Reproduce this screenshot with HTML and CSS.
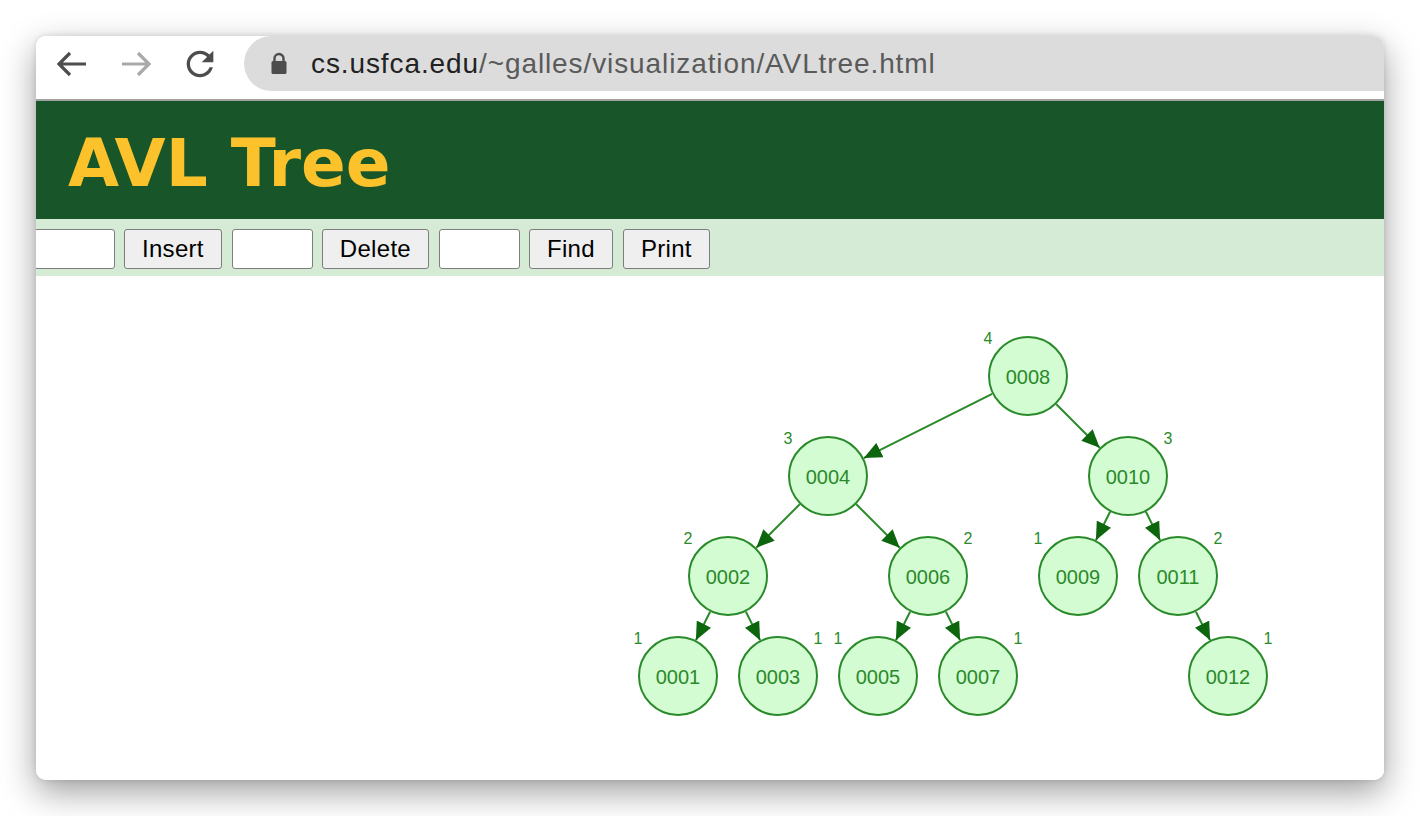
FILE: index.html
```html
<!DOCTYPE html>
<html>
<head>
<meta charset="utf-8">
<title>AVL Tree</title>
<link rel="stylesheet" href="styles.css">
</head>
<body>
<div class="window">
  <div class="browserbar">
    <div class="nav">
      <span class="navbtn">
        <svg width="32" height="26" viewBox="0 0 32 26"><path d="M3 13H30M14 2L3 13L14 24" fill="none" stroke="#4d4d4d" stroke-width="3.2"/></svg>
      </span>
      <span class="navbtn">
        <svg width="32" height="26" viewBox="0 0 32 26"><path d="M2 13H29M18 2L29 13L18 24" fill="none" stroke="#a9a9a9" stroke-width="3.2"/></svg>
      </span>
      <span class="navbtn">
        <svg width="40" height="40" viewBox="0 0 24 24"><path fill="#4d4d4d" d="M17.65 6.35C16.2 4.9 14.21 4 12 4c-4.42 0-7.99 3.58-7.99 8s3.57 8 7.99 8c3.73 0 6.84-2.55 7.73-6h-2.08c-.82 2.33-3.04 4-5.65 4-3.31 0-6-2.69-6-6s2.69-6 6-6c1.66 0 3.14.69 4.22 1.78L13 11h7V4l-2.35 2.35z"/></svg>
      </span>
    </div>
    <div class="omnibox">
      <svg class="lock" width="16" height="23" viewBox="0 0 16 23"><path d="M3.5 10V6.5a4.5 4.5 0 0 1 9 0V10" fill="none" stroke="#4d4d4d" stroke-width="2.4"/><rect x="0.5" y="9" width="15" height="13" rx="1.5" fill="#4d4d4d"/></svg>
      <span class="url"><span class="host">cs.usfca.edu</span>/~galles/visualization/AVLtree.html</span>
    </div>
  </div>
  <div class="header">
    <h1 class="title">AVL Tree</h1>
  </div>
  <div class="controls">
    <input class="field first" type="text">
    <button class="btn">Insert</button>
    <input class="field" type="text">
    <button class="btn">Delete</button>
    <input class="field" type="text">
    <button class="btn">Find</button>
    <button class="btn">Print</button>
  </div>
  <div class="canvas">
    <svg class="tree" width="1348" height="504" viewBox="0 0 1348 504">
      <defs>
        <marker id="arr" viewBox="0 0 18 16" refX="18" refY="8" markerWidth="18" markerHeight="16" markerUnits="userSpaceOnUse" orient="auto">
          <path d="M0 0L18 8L0 16Z" fill="#0d660d"/>
        </marker>
      </defs>
      <g class="edges">
        <line x1="956.2" y1="117.9" x2="827.8" y2="182.1"/>
        <line x1="1020.3" y1="128.3" x2="1063.7" y2="171.7"/>
        <line x1="763.7" y1="228.3" x2="720.3" y2="271.7"/>
        <line x1="820.3" y1="228.3" x2="863.7" y2="271.7"/>
        <line x1="1074.1" y1="235.8" x2="1059.9" y2="264.2"/>
        <line x1="1109.9" y1="235.8" x2="1124.1" y2="264.2"/>
        <line x1="674.1" y1="335.8" x2="659.9" y2="364.2"/>
        <line x1="709.9" y1="335.8" x2="724.1" y2="364.2"/>
        <line x1="874.1" y1="335.8" x2="859.9" y2="364.2"/>
        <line x1="909.9" y1="335.8" x2="924.1" y2="364.2"/>
        <line x1="1159.9" y1="335.8" x2="1174.1" y2="364.2"/>
      </g>
      <g class="nodes">
        <circle cx="992" cy="100" r="39"/><text x="992" y="101">0008</text>
        <circle cx="792" cy="200" r="39"/><text x="792" y="201">0004</text>
        <circle cx="1092" cy="200" r="39"/><text x="1092" y="201">0010</text>
        <circle cx="692" cy="300" r="39"/><text x="692" y="301">0002</text>
        <circle cx="892" cy="300" r="39"/><text x="892" y="301">0006</text>
        <circle cx="1042" cy="300" r="39"/><text x="1042" y="301">0009</text>
        <circle cx="1142" cy="300" r="39"/><text x="1142" y="301">0011</text>
        <circle cx="642" cy="400" r="39"/><text x="642" y="401">0001</text>
        <circle cx="742" cy="400" r="39"/><text x="742" y="401">0003</text>
        <circle cx="842" cy="400" r="39"/><text x="842" y="401">0005</text>
        <circle cx="942" cy="400" r="39"/><text x="942" y="401">0007</text>
        <circle cx="1192" cy="400" r="39"/><text x="1192" y="401">0012</text>
      </g>
      <g class="heights">
        <text x="952" y="62">4</text>
        <text x="752" y="162">3</text>
        <text x="1132" y="162">3</text>
        <text x="652" y="262">2</text>
        <text x="932" y="262">2</text>
        <text x="1002" y="262">1</text>
        <text x="1182" y="262">2</text>
        <text x="602" y="362">1</text>
        <text x="782" y="362">1</text>
        <text x="802" y="362">1</text>
        <text x="982" y="362">1</text>
        <text x="1232" y="362">1</text>
      </g>
    </svg>
  </div>
</div>
</body>
</html>
```

FILE: styles.css
```css
html, body {
  margin: 0;
  padding: 0;
  background: #ffffff;
}
body {
  width: 1420px;
  height: 816px;
  overflow: hidden;
  padding-top: 36px;
  box-sizing: border-box;
}
.window {
  margin-left: 36px;
  width: 1348px;
  height: 744px;
  border-radius: 10px;
  overflow: hidden;
  background: #fff;
  box-shadow: 0 12px 34px rgba(0, 0, 0, 0.38), 0 0 6px rgba(0, 0, 0, 0.12);
  display: flex;
  flex-direction: column;
}
.browserbar {
  height: 63px;
  border-bottom: 2px solid #a2a2a2;
  display: flex;
  align-items: flex-start;
  background: #fff;
  flex: none;
}
.nav {
  display: flex;
  padding-left: 4px;
  height: 55px;
  align-items: center;
}
.navbtn {
  width: 64px;
  height: 55px;
  display: flex;
  align-items: center;
  justify-content: center;
}
.omnibox {
  margin-left: 12px;
  flex: 1;
  height: 55px;
  background: #dcdcdc;
  border-radius: 28px 0 0 28px;
  display: flex;
  align-items: center;
}
.lock {
  margin-left: 27px;
  margin-top: -1px;
}
.url {
  margin-left: 24px;
  font-family: "Liberation Sans", Arial, sans-serif;
  font-size: 28px;
  color: #5a5a5a;
  letter-spacing: 0.9px;
  white-space: nowrap;
}
.host {
  color: #222;
}
.header {
  height: 118px;
  background: #185629;
  box-sizing: border-box;
  padding: 30px 0 0 32px;
  flex: none;
}
.title {
  margin: 0;
  font-family: "DejaVu Sans", Verdana, sans-serif;
  font-weight: bold;
  font-size: 66px;
  line-height: 66px;
  color: #fbc22c;
}
.controls {
  height: 57px;
  background: #d6ebd6;
  display: flex;
  align-items: flex-start;
  padding-top: 10px;
  box-sizing: border-box;
  flex: none;
}
.field {
  width: 81px;
  height: 40px;
  box-sizing: border-box;
  border: 1px solid #7d7d7d;
  border-radius: 3px;
  background: #fff;
  margin: 0 9px 0 0;
  padding: 0;
}
.field.first {
  margin-left: -2px;
}
.btn {
  height: 40px;
  box-sizing: border-box;
  border: 1px solid #7d7d7d;
  border-radius: 3px;
  background: #efefef;
  font-family: "Liberation Sans", Arial, sans-serif;
  font-size: 24px;
  letter-spacing: 0.3px;
  color: #000;
  padding: 0 17px;
  margin: 0 10px 0 0;
}
.canvas {
  flex: 1;
  background: #fff;
}
.tree {
  display: block;
}
.edges line {
  stroke: #2a8a2a;
  stroke-width: 2;
  marker-end: url(#arr);
}
.nodes circle {
  fill: #d3fcd3;
  stroke: #2a8a2a;
  stroke-width: 2;
}
.nodes text {
  font-family: "Liberation Sans", Arial, sans-serif;
  font-size: 20px;
  fill: #2a8a2a;
  text-anchor: middle;
  dominant-baseline: central;
}
.heights text {
  font-family: "Liberation Sans", Arial, sans-serif;
  font-size: 16px;
  fill: #2a8a2a;
  text-anchor: middle;
  dominant-baseline: central;
}
```
